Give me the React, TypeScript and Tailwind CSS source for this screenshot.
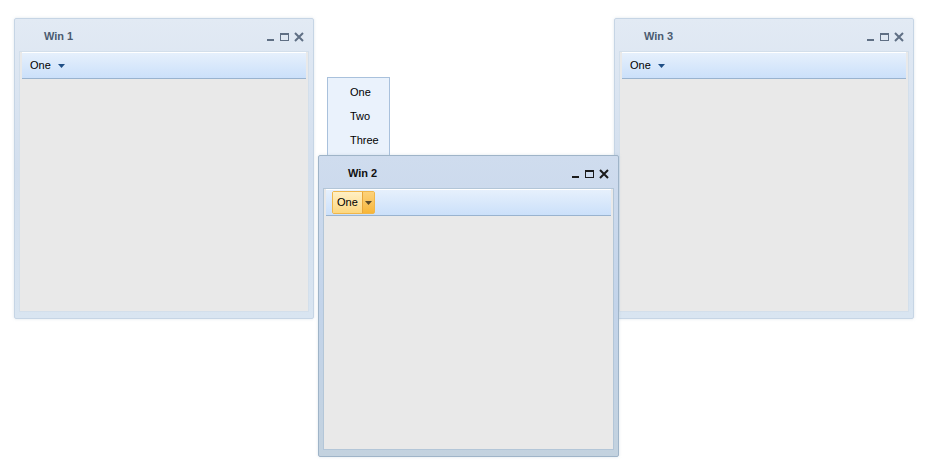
import React from 'react';

type WinProps = {
  title: string;
  left: number;
  top: number;
  width: number;
  height: number;
  active?: boolean;
};

const Controls = ({ active }: { active?: boolean }) => {
  const c = active ? '#1b1b1b' : '#5f6f84';
  return (
    <div className="flex items-center gap-[4px] pr-[5px] pt-[2px]">
      <svg width="9" height="10" viewBox="0 0 9 10">
        <rect x="1" y="7" width="7" height="2" fill={c} />
      </svg>
      <svg width="11" height="10" viewBox="0 0 11 10">
        <rect x="1.5" y="1.5" width="8" height="7" fill="none" stroke={c} strokeWidth="1" />
        <rect x="1" y="1" width="9" height="2" fill={c} />
      </svg>
      <svg width="10" height="10" viewBox="0 0 10 10">
        <path d="M1 1 L9 9 M9 1 L1 9" stroke={c} strokeWidth="2" />
      </svg>
    </div>
  );
};

const Arrow = ({ color }: { color: string }) => (
  <svg width="7" height="4" viewBox="0 0 7 4">
    <path d="M0 0 L7 0 L3.5 4 Z" fill={color} />
  </svg>
);

const Win = ({ title, left, top, width, height, active }: WinProps) => (
  <div
    className={
      'absolute flex flex-col rounded-[2px] border px-[4px] pb-[6px] shadow-[0_0_3px_rgba(160,180,200,0.35)] ' +
      (active
        ? 'border-[#9fb4c8] bg-gradient-to-b from-[#cfdcee] via-[#c3d4ea] to-[#c3d2df]'
        : 'border-[#c6d5e5] bg-gradient-to-b from-[#e2eaf4] via-[#d3dfee] to-[#d9e5f1]')
    }
    style={{ left, top, width, height }}
  >
    <div className="flex h-[32px] shrink-0 items-center justify-between pt-[2px]">
      <span
        className={
          'pl-[25px] text-[11px] font-bold ' + (active ? 'text-[#111]' : 'text-[#4b5b70]')
        }
      >
        {title}
      </span>
      <Controls active={active} />
    </div>
    <div
      className={
        'flex flex-1 flex-col border bg-[#e9e9e9] ' +
        (active ? 'border-[#b3c6d8]' : 'border-[#d3dfeb]')
      }
    >
      <div className="mx-[2px] flex h-[27px] shrink-0 items-center border-b border-[#99b3cf] border-t border-t-white bg-gradient-to-b from-[#e6f0fc] to-[#cbe0fa] px-[4px]">
        {active ? (
          <div className="ml-[2px] flex h-[23px] items-stretch rounded-[2px] border border-[#f0b64a]">
            <span className="flex items-center bg-gradient-to-b from-[#fff0c4] to-[#fdd77f] px-[4px] text-[11px] text-black">
              One
            </span>
            <span className="flex w-[12px] items-center justify-center border-l border-[#e8a63a] bg-gradient-to-b from-[#fcd27a] to-[#f7b637]">
              <Arrow color="#5a4a2a" />
            </span>
          </div>
        ) : (
          <div className="flex items-center gap-[7px] pl-[4px]">
            <span className="text-[11px] text-black">One</span>
            <Arrow color="#1f4f86" />
          </div>
        )}
      </div>
      <div className="flex-1" />
    </div>
  </div>
);

const App: React.FC = () => {
  return (
    <div
      className="relative h-[474px] w-[942px] overflow-hidden bg-white"
      style={{ fontFamily: 'Tahoma, "Liberation Sans", sans-serif' }}
    >
      <Win title="Win 1" left={14} top={18} width={300} height={301} />
      <Win title="Win 3" left={614} top={18} width={300} height={301} />
      <div className="absolute left-[327px] top-[77px] flex h-[84px] w-[63px] flex-col border border-[#a9c1dc] bg-[#eaf2fc] pt-[2px]">
        <div className="flex h-[24px] items-center pl-[22px] text-[11px] text-black">One</div>
        <div className="flex h-[24px] items-center pl-[22px] text-[11px] text-black">Two</div>
        <div className="flex h-[24px] items-center pl-[22px] text-[11px] text-black">Three</div>
      </div>
      <Win title="Win 2" left={318} top={155} width={301} height={302} active />
    </div>
  );
};

export default App;
